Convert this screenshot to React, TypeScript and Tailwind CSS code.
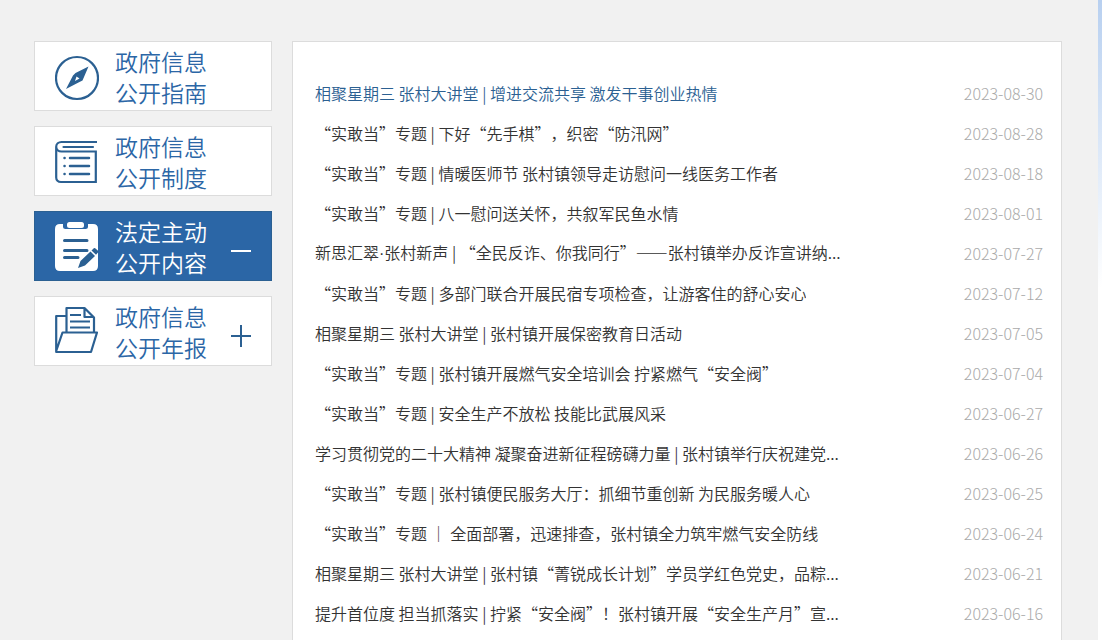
import type { ReactNode } from "react";

const GuideIcon = () => (
  <svg className="h-12 w-11 shrink-0" viewBox="0 0 44 48" fill="none" aria-hidden="true">
    <circle cx="22" cy="25" r="21" stroke="currentColor" strokeWidth="2.2" />
    <path
      fillRule="evenodd"
      fill="currentColor"
      d="M33.5 13.500 27.500 27.500 23.500 29.500 11 36 18 22.500 20.500 20ZM21.500 23.500 20 28 24.500 25.500Z"
    />
  </svg>
);

const BookIcon = () => (
  <svg className="h-12 w-11 shrink-0" viewBox="0 0 44 48" fill="none" stroke="currentColor" aria-hidden="true">
    <path
      strokeWidth="2.200"
      d="M42 4H6.500C3.500 4 1.200 6 1.200 8.700S3.500 13.500 6.500 13.500H40.800V44H6C3 44 1.200 42 1.200 39.500V8.700"
    />
    <path strokeWidth="2.200" strokeLinecap="round" d="M8.500 9H38" />
    <path
      strokeWidth="2.500"
      strokeLinecap="round"
      d="M15 20H34M15 28H34M15 36H34M9.500 20h.1M9.500 28h.1M9.500 36h.1"
    />
  </svg>
);

const ClipboardIcon = () => (
  <svg className="h-[50px] w-11 shrink-0" viewBox="0 1 44 50" fill="none" aria-hidden="true">
    <path
      fill="white"
      d="M5 3H8V5.500Q8 8 10.500 8H30.500Q33 8 33 5.500V3H38Q43 3 43 8V45Q43 50 38 50H5Q0 50 0 45V8Q0 3 5 3Z"
    />
    <rect x="12" y="1" width="17" height="6" rx="2.500" fill="white" />
    <g className="stroke-[#2b6092]" strokeWidth="3" strokeLinecap="round">
      <path d="M9.500 19.500H32M9.500 29.500H32M9.500 36.500H23" />
    </g>
    <path
      className="fill-[#2b6092]"
      d="M23 47 25.500 40 35.500 30.500 40 35 30 44.500ZM36.500 29.500 38.800 27.300Q39.700 26.700 40.500 27.400L43 29.700Q43.700 30.700 43 31.500L41 33.800Z"
    />
  </svg>
);

const FolderIcon = () => (
  <svg
    className="h-12 w-11 shrink-0"
    viewBox="0 3 44 48"
    fill="none"
    stroke="currentColor"
    strokeWidth="2.200"
    strokeLinejoin="round"
    overflow="visible"
    aria-hidden="true"
  >
    <path d="M11.500 11H1.200V47H36L42 27.500H7.500L1.200 46" />
    <path d="M11.500 27V3H29.500L39 12.500V27M29.500 3V12H39" />
    <path d="M15 10H26M15 16.500H35M15 22.500H35" />
  </svg>
);

type Section = {
  lines: [string, string];
  icon: ReactNode;
  active?: boolean;
  toggle?: "open" | "closed";
};

const sections: Section[] = [
  { lines: ["政府信息", "公开指南"], icon: <GuideIcon /> },
  { lines: ["政府信息", "公开制度"], icon: <BookIcon /> },
  { lines: ["法定主动", "公开内容"], icon: <ClipboardIcon />, active: true, toggle: "open" },
  { lines: ["政府信息", "公开年报"], icon: <FolderIcon />, toggle: "closed" },
];

type Article = { title: ReactNode; date: string };

const articles: Article[] = [
  { title: "相聚星期三 张村大讲堂 | 增进交流共享 激发干事创业热情", date: "2023-08-30" },
  { title: "“实敢当”专题 | 下好“先手棋”，织密“防汛网”", date: "2023-08-28" },
  { title: "“实敢当”专题 | 情暖医师节 张村镇领导走访慰问一线医务工作者", date: "2023-08-18" },
  { title: "“实敢当”专题 | 八一慰问送关怀，共叙军民鱼水情", date: "2023-08-01" },
  {
    title: (
      <>
        新思汇翠<span className="font-['Liberation_Sans',sans-serif]">·</span>张村新声 |
        “全民反诈、你我同行”——张村镇举办反诈宣讲纳...
      </>
    ),
    date: "2023-07-27",
  },
  { title: "“实敢当”专题 | 多部门联合开展民宿专项检查，让游客住的舒心安心", date: "2023-07-12" },
  { title: "相聚星期三 张村大讲堂 | 张村镇开展保密教育日活动", date: "2023-07-05" },
  { title: "“实敢当”专题 | 张村镇开展燃气安全培训会 拧紧燃气“安全阀”", date: "2023-07-04" },
  { title: "“实敢当”专题 | 安全生产不放松 技能比武展风采", date: "2023-06-27" },
  { title: "学习贯彻党的二十大精神 凝聚奋进新征程磅礴力量 | 张村镇举行庆祝建党...", date: "2023-06-26" },
  { title: "“实敢当”专题 | 张村镇便民服务大厅：抓细节重创新 为民服务暖人心", date: "2023-06-25" },
  { title: "“实敢当”专题 ｜ 全面部署，迅速排查，张村镇全力筑牢燃气安全防线", date: "2023-06-24" },
  { title: "相聚星期三 张村大讲堂 | 张村镇“菁锐成长计划”学员学红色党史，品粽...", date: "2023-06-21" },
  { title: "提升首位度 担当抓落实 | 拧紧“安全阀”！张村镇开展“安全生产月”宣...", date: "2023-06-16" },
];

const SectionLink = ({ lines, icon, active, toggle }: Section) => (
  <a
    href="#"
    className={`flex h-[70px] items-center border px-5 pt-0.5 ${
      active ? "border-[#2b6092] bg-[#2b66a6] text-white" : "border-[#dcdcdc] bg-white text-[#2b6092]"
    }`}
  >
    {icon}
    <span
      className={`ml-4 text-[23px] leading-[31px] font-[350] ${active ? "text-white" : "text-[#2b66a6]"}`}
    >
      {lines[0]}
      <br />
      {lines[1]}
    </span>
    {toggle && (
      <svg
        className="mt-2.5 ml-auto size-5 overflow-visible"
        viewBox="0 0 20 20"
        stroke="currentColor"
        strokeWidth="2"
        aria-hidden="true"
      >
        <path d={toggle === "open" ? "M0 9H20" : "M0 9H20M10 -2V20"} />
      </svg>
    )}
  </a>
);

export default function App() {
  return (
    <div
      lang="zh-CN"
      className="flex h-screen overflow-hidden bg-[#f1f1f1] font-['Noto_Sans_CJK_SC',sans-serif] [text-spacing-trim:space-all]"
    >
      <div className="flex min-w-0 flex-1 items-start gap-5 pt-[41px] pr-9 pl-[34px]">
        <nav className="flex w-[238px] shrink-0 flex-col gap-[15px]">
          {sections.map((section) => (
            <SectionLink key={section.lines[1]} {...section} />
          ))}
        </nav>

        <main className="min-w-0 flex-1 border border-[#dcdcdc] bg-white pt-[31px] pr-[18px] pb-8 pl-[22px]">
          <ul>
            {articles.map((article, index) => (
              <li key={article.date} className="flex h-10 items-center justify-between">
                <a
                  href="#"
                  className={`truncate text-base/10 font-[350] ${index === 0 ? "text-[#2b6092]" : "text-[#333]"}`}
                >
                  {article.title}
                </a>
                <time dateTime={article.date} className="shrink-0 text-base/10 font-light text-[#aaa]">
                  {article.date}
                </time>
              </li>
            ))}
          </ul>
        </main>
      </div>
      <div className="w-1 shrink-0 bg-linear-to-b from-[#b8d0f0] to-white to-45%" />
    </div>
  );
}
